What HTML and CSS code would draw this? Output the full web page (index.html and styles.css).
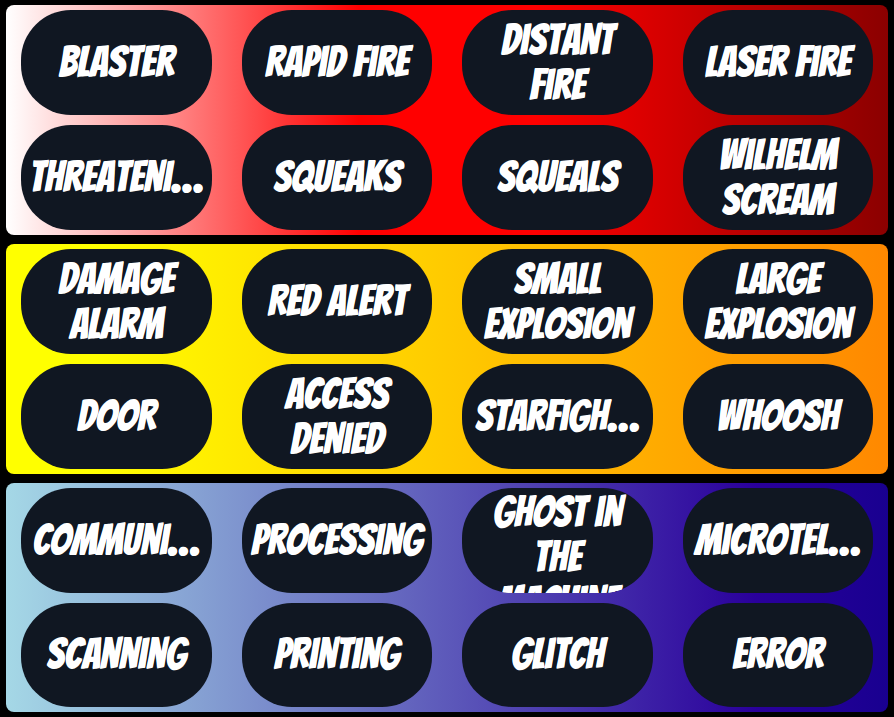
FILE: index.html
```
<!DOCTYPE html>
<html lang="en">
<head>
<meta charset="utf-8">
<meta name="viewport" content="width=device-width, initial-scale=1">
<title>Soundboard</title>
<link rel="stylesheet" href="styles.css">
</head>
<body>
<main class="board">
  <section class="bank bank-red">
    <button class="pad" type="button"><span class="label">Blaster</span></button>
    <button class="pad" type="button"><span class="label">Rapid Fire</span></button>
    <button class="pad" type="button"><span class="label">Distant Fire</span></button>
    <button class="pad" type="button"><span class="label">Laser Fire</span></button>
    <button class="pad" type="button"><span class="label">Threateni…</span></button>
    <button class="pad" type="button"><span class="label">Squeaks</span></button>
    <button class="pad" type="button"><span class="label">Squeals</span></button>
    <button class="pad" type="button"><span class="label">Wilhelm Scream</span></button>
  </section>
  <section class="bank bank-yellow">
    <button class="pad" type="button"><span class="label">Damage Alarm</span></button>
    <button class="pad" type="button"><span class="label">Red Alert</span></button>
    <button class="pad" type="button"><span class="label">Small Explosion</span></button>
    <button class="pad" type="button"><span class="label">Large Explosion</span></button>
    <button class="pad" type="button"><span class="label">Door</span></button>
    <button class="pad" type="button"><span class="label">Access Denied</span></button>
    <button class="pad" type="button"><span class="label">Starfigh…</span></button>
    <button class="pad" type="button"><span class="label">Whoosh</span></button>
  </section>
  <section class="bank bank-blue">
    <button class="pad" type="button"><span class="label">Communi…</span></button>
    <button class="pad" type="button"><span class="label">Processing</span></button>
    <button class="pad" type="button"><span class="label">Ghost in the Machine</span></button>
    <button class="pad" type="button"><span class="label">Microtel…</span></button>
    <button class="pad" type="button"><span class="label">Scanning</span></button>
    <button class="pad" type="button"><span class="label">Printing</span></button>
    <button class="pad" type="button"><span class="label">Glitch</span></button>
    <button class="pad" type="button"><span class="label">Error</span></button>
  </section>
</main>
</body>
</html>
```
FILE: styles.css
```
* {
  box-sizing: border-box;
}

body {
  margin: 0;
  background: #000;
}

.board {
  display: grid;
  grid-template-rows: minmax(0, 230fr) minmax(0, 230fr) minmax(0, 229fr);
  gap: 9px;
  height: 100vh;
  padding: 5px 6px;
}

.bank {
  display: grid;
  grid-template-columns: repeat(4, minmax(0, 1fr));
  grid-template-rows: repeat(2, minmax(0, 1fr));
  gap: 10px 30px;
  padding: 5px 15px;
  border-radius: 8px;
}

.bank-red {
  background: linear-gradient(to right, white, red 40%, red 60%, darkred);
}

.bank-yellow {
  background: linear-gradient(to right, yellow 10%, #ff8800);
}

.bank-blue {
  background: linear-gradient(to right, #a5d8e6, #2a009b 85%, #190090);
}

.pad {
  display: flex;
  flex-direction: column;
  justify-content: safe center;
  padding: 1px 8px 3px;
  border: 0;
  border-radius: 50px;
  overflow: hidden;
  background: #101722;
  color: #fff;
  font: 42px/45px Bangers, "Roboto Condensed", sans-serif;
  text-align: center;
  text-shadow: 0 1px #fff;
  cursor: pointer;
}

.label {
  display: block;
  width: 100%;
}
```
